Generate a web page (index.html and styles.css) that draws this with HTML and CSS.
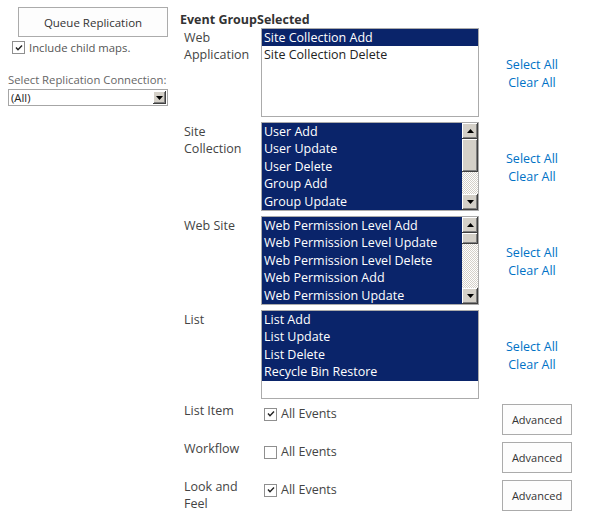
FILE: index.html
```html
<!DOCTYPE html>
<html lang="en">
<head>
    <meta charset="UTF-8" />
    <title>Replication Event Groups</title>
    <link rel="stylesheet" href="styles.css">
</head>
<body>
    <div class="page">
    <!-- LEFT SIDE -->
    <div class="side">
        <button class="queue">Queue Replication</button>
        <div class="check-line">
            <span class="cb"><svg width="10" height="10" viewBox="0 0 10 10"><path d="M2 4.5 L4 6.8 L8 2.5" fill="none" stroke="#222" stroke-width="1.4"/></svg></span>
            <span>Include child maps.</span>
        </div>
        <div class="conn-label">Select Replication Connection:</div>
        <div class="dropdown">
            <span class="dd-text">(All)</span>
            <span class="dd-btn"><svg width="7" height="4" viewBox="0 0 7 4"><path d="M0 0 H7 L3.5 4 Z" fill="#000"/></svg></span>
        </div>
    </div>

    <!-- EVENT GROUPS -->
    <div class="events">
        <div class="head"><span class="head-group">Event Group</span><span>Selected</span></div>

        <div class="label">Web Application</div>
        <div class="listbox">
            <div class="items">
                <div class="opt sel">Site Collection Add</div>
                <div class="opt">Site Collection Delete</div>
            </div>
        </div>
        <div class="links"><a href="#">Select All</a><a href="#">Clear All</a></div>

        <div class="label">Site Collection</div>
        <div class="listbox">
            <div class="items">
                <div class="opt sel">User Add</div>
                <div class="opt sel">User Update</div>
                <div class="opt sel">User Delete</div>
                <div class="opt sel">Group Add</div>
                <div class="opt sel">Group Update</div>
            </div>
            <div class="sbar">
                <div class="sb-btn"><svg width="7" height="4" viewBox="0 0 7 4"><path d="M0 4 H7 L3.5 0 Z" fill="#000"/></svg></div>
                <div class="sb-thumb big"></div>
                <div class="sb-track"></div>
                <div class="sb-btn"><svg width="7" height="4" viewBox="0 0 7 4"><path d="M0 0 H7 L3.5 4 Z" fill="#000"/></svg></div>
            </div>
        </div>
        <div class="links"><a href="#">Select All</a><a href="#">Clear All</a></div>

        <div class="label">Web Site</div>
        <div class="listbox">
            <div class="items">
                <div class="opt sel">Web Permission Level Add</div>
                <div class="opt sel">Web Permission Level Update</div>
                <div class="opt sel">Web Permission Level Delete</div>
                <div class="opt sel">Web Permission Add</div>
                <div class="opt sel">Web Permission Update</div>
            </div>
            <div class="sbar">
                <div class="sb-btn"><svg width="7" height="4" viewBox="0 0 7 4"><path d="M0 4 H7 L3.5 0 Z" fill="#000"/></svg></div>
                <div class="sb-thumb small"></div>
                <div class="sb-track"></div>
                <div class="sb-btn"><svg width="7" height="4" viewBox="0 0 7 4"><path d="M0 0 H7 L3.5 4 Z" fill="#000"/></svg></div>
            </div>
        </div>
        <div class="links"><a href="#">Select All</a><a href="#">Clear All</a></div>

        <div class="label">List</div>
        <div class="listbox">
            <div class="items">
                <div class="opt sel">List Add</div>
                <div class="opt sel">List Update</div>
                <div class="opt sel">List Delete</div>
                <div class="opt sel">Recycle Bin Restore</div>
            </div>
        </div>
        <div class="links"><a href="#">Select All</a><a href="#">Clear All</a></div>

        <div class="label small-row">List Item</div>
        <div class="all-events">
            <span class="cb"><svg width="10" height="10" viewBox="0 0 10 10"><path d="M2 4.5 L4 6.8 L8 2.5" fill="none" stroke="#222" stroke-width="1.4"/></svg></span>
            <span>All Events</span>
        </div>
        <div class="adv-cell"><button class="advanced">Advanced</button></div>

        <div class="label small-row">Workflow</div>
        <div class="all-events">
            <span class="cb"></span>
            <span>All Events</span>
        </div>
        <div class="adv-cell"><button class="advanced">Advanced</button></div>

        <div class="label small-row">Look and Feel</div>
        <div class="all-events">
            <span class="cb"><svg width="10" height="10" viewBox="0 0 10 10"><path d="M2 4.5 L4 6.8 L8 2.5" fill="none" stroke="#222" stroke-width="1.4"/></svg></span>
            <span>All Events</span>
        </div>
        <div class="adv-cell"><button class="advanced">Advanced</button></div>
    </div>
    </div>
</body>
</html>
```

FILE: styles.css
```css
body {
    margin: 0;
    padding: 0;
    background: #fff;
    font-family: "Open Sans", "Noto Sans", sans-serif;
    color: #444;
}
.page {
    display: flex;
    width: 591px;
}

/* Left side */
.side {
    width: 180px;
    padding-top: 7px;
    display: flex;
    flex-direction: column;
}
.queue {
    margin-left: 18px;
    width: 150px;
    height: 30px;
    border: 1px solid #ababab;
    background: #fdfdfd;
    font-family: inherit;
    font-size: 11.5px;
    color: #333;
    padding: 0;
}
.check-line {
    display: flex;
    align-items: center;
    gap: 4px;
    margin: 4px 0 0 12px;
    font-size: 11.3px;
    color: #555;
    height: 13px;
}
.cb {
    width: 11px;
    height: 11px;
    border: 1px solid #8f8f8f;
    background: #fff;
    display: flex;
    align-items: center;
    justify-content: center;
    flex-shrink: 0;
}
.conn-label {
    margin: 19px 0 0 8px;
    font-size: 11.3px;
    color: #666;
    line-height: 14px;
}
.dropdown {
    margin: 2px 0 0 8px;
    width: 158px;
    height: 15px;
    border: 1px solid #a6a6a6;
    display: flex;
    align-items: center;
    justify-content: space-between;
    font-size: 11.3px;
    color: #222;
}
.dd-text {
    padding-left: 2px;
}
.dd-btn {
    width: 13px;
    height: 13px;
    margin-right: 1px;
    background: #d4d0c8;
    box-shadow: inset -1px -1px #404040, inset 1px 1px #fff, inset -2px -2px #808080;
    display: flex;
    align-items: center;
    justify-content: center;
}

/* Event groups grid */
.events {
    padding-top: 12px;
    display: grid;
    grid-template-columns: 81px 218px 106px;
    grid-auto-rows: auto;
    row-gap: 5px;
    align-items: start;
}
.head {
    grid-column: 1 / 4;
    font-weight: bold;
    font-size: 12.5px;
    color: #333;
    line-height: 16px;
    margin-bottom: -5px;
}
.head-group {
    display: inline-block;
    width: 77px;
}
.label {
    padding: 1px 0 0 4px;
    font-size: 12.5px;
    line-height: 17px;
    color: #444;
    width: 70px;
}
.label.small-row {
    padding-top: 0;
    margin-top: -2px;
}
.listbox {
    height: 87px;
    border: 1px solid #ababab;
    display: flex;
    background: #fff;
}
.items {
    flex: 1;
}
.opt {
    height: 17.4px;
    line-height: 18.4px;
    padding-left: 2px;
    font-size: 12.5px;
    color: #222;
    white-space: nowrap;
    overflow: hidden;
}
.opt.sel {
    background: #0a246a;
    color: #fff;
}
.sbar {
    width: 16px;
    display: flex;
    flex-direction: column;
}
.sb-btn, .sb-thumb {
    background: #d4d0c8;
    box-shadow: inset -1px -1px #404040, inset 1px 1px #fff, inset -2px -2px #808080;
    display: flex;
    align-items: center;
    justify-content: center;
}
.sb-btn {
    height: 16px;
}
.sb-thumb.big {
    height: 33px;
}
.sb-thumb.small {
    height: 11px;
}
.sb-track {
    flex: 1;
    background: repeating-conic-gradient(#fff 0 25%, #d4d0c8 0 50%) 0 0 / 2px 2px;
}
.links {
    display: flex;
    flex-direction: column;
    align-items: center;
    align-self: center;
    padding-top: 3px;
    font-size: 12.5px;
    line-height: 18px;
}
.links a {
    color: #0072c6;
    text-decoration: none;
}
.all-events {
    display: flex;
    align-items: center;
    gap: 4px;
    padding: 3px 0 0 3px;
    font-size: 12.5px;
    color: #444;
    line-height: 14px;
}
.adv-cell {
    padding-left: 23px;
    margin-bottom: 2px;
}
.advanced {
    width: 70px;
    height: 31px;
    border: 1px solid #ababab;
    background: #fdfdfd;
    font-family: inherit;
    font-size: 11px;
    color: #333;
    padding: 0;
}
```
